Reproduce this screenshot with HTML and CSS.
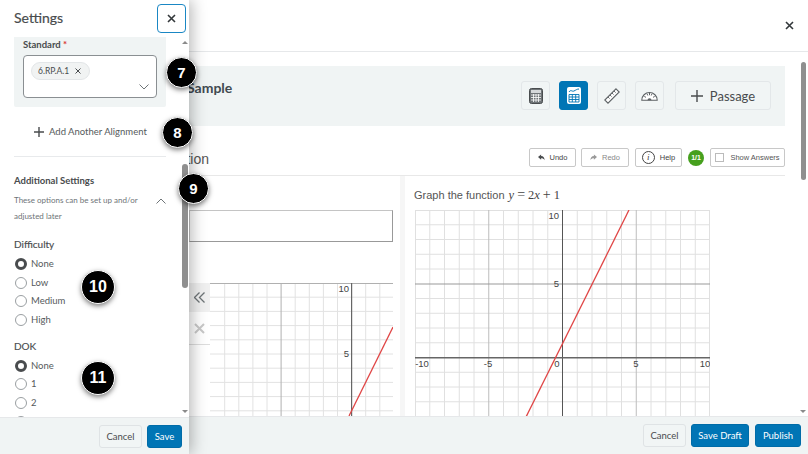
FILE: index.html
```html
<!DOCTYPE html>
<html lang="en">
<head>
  <meta charset="UTF-8">
  <title>Question Settings</title>
  <link rel="stylesheet" href="styles.css">
</head>
<body>
  <div class="page">
    <!-- Main dialog behind the settings panel -->
    <div class="main">
      <header class="main-head">
        <svg width="9" height="9" viewBox="0 0 9 9"><path d="M1 1l7 7M8 1L1 8" stroke="#33383b" stroke-width="1.6"/></svg>
      </header>

      <div class="content">
        <div class="banner">
          <h2 class="banner-title">Sample</h2>
          <div class="tools">
            <span class="tool">
              <svg width="14" height="16" viewBox="0 0 14 16"><rect x=".5" y=".5" width="13" height="15" rx="2" fill="#6f7477" stroke="#494c4e"/><rect x="2" y="2" width="10" height="3" fill="#d5d8da"/><path d="M2 7h10M2 9.5h10M2 12h10M4.5 6v8M7 6v8M9.5 6v8" stroke="#fff" stroke-width=".8"/></svg>
            </span>
            <span class="tool tool-on">
              <svg width="14" height="17" viewBox="0 0 14 17"><rect width="14" height="17" rx="2" fill="#fff"/><path d="M2 5c2-3 3 0 5-1s3-2 5-2" fill="none" stroke="#0075b5"/><path d="M2 7.500h10v7.500H2zM2 10h10M2 12.500h10M5.300 7.500V15M8.700 7.500V15" fill="none" stroke="#0075b5" stroke-width=".9"/></svg>
            </span>
            <span class="tool">
              <svg width="16" height="16" viewBox="0 0 16 16"><path d="M12 .8l3.200 3.200L4 15.200.8 12z" fill="#fff" stroke="#5c6164" stroke-width="1.100"/><path d="M10 3l1.600 1.600M8 5l1.600 1.600M6 7l1.600 1.600M4 9l1.600 1.600" stroke="#5c6164" stroke-width=".9"/></svg>
            </span>
            <span class="tool">
              <svg width="17" height="11" viewBox="0 0 17 11"><path d="M.8 10.200a7.700 7.700 0 0 1 15.400 0z" fill="#fff" stroke="#5c6164" stroke-width="1.100"/><path d="M3.300 6.500l1.700.8M6 3.800l.8 1.700M8.500 3v2.200M11 3.800l-.8 1.700M13.700 6.500l-1.700.8" stroke="#5c6164"/><path d="M6.500 10.200a2 2 0 0 1 4 0z" fill="#5c6164"/></svg>
            </span>
            <span class="tool tool-passage">
              <svg width="12" height="12" viewBox="0 0 12 12"><path d="M6 0v12M0 6h12" stroke="#494c4e" stroke-width="1.400"/></svg>
              Passage
            </span>
          </div>
        </div>

        <div class="question-head">
          <h3 class="question-title">Question</h3>
          <div class="question-actions">
            <span class="small-btn btn-undo">
              <svg width="7" height="7" viewBox="0 0 9 8"><path d="M4 0L0 3.500 4 7V5c2 0 3.500.5 4.500 2.500C8.500 4.500 7 2 4 2z" fill="#494c4e"/></svg>
              Undo
            </span>
            <span class="small-btn btn-redo">
              <svg width="7" height="7" viewBox="0 0 9 8"><path d="M5 0l4 3.500L5 7V5C3 5 1.500 5.500.5 7.500.5 4.500 2 2 5 2z" fill="#9a9a9a"/></svg>
              Redo
            </span>
            <span class="small-btn btn-help"><i class="help-icon">i</i>Help</span>
            <span class="score">1/1</span>
            <span class="small-btn btn-answers"><i class="check-box"></i>Show Answers</span>
          </div>
        </div>

        <div class="question-grid">
          <section class="part part-left">
            <div class="answer-box"></div>
            <div class="graph-wrap">
              <div class="graph-tools">
                <span class="graph-tool graph-tool-back">
                  <svg width="11" height="11" viewBox="0 0 11 11"><path d="M5.500.5l-5 5 5 5M10.500.5l-5 5 5 5" fill="none" stroke="#6e7477" stroke-width="1.300"/></svg>
                </span>
                <span class="graph-tool graph-tool-del">
                  <svg width="11" height="11" viewBox="0 0 11 11"><path d="M1 1l9 9M10 1l-9 9" stroke="#c8c8c8" stroke-width="2"/></svg>
                </span>
              </div>
              <svg class="graph" width="183" height="133" viewBox="0 0 183 133">
                <path d="M14.700 0v133M28.800 0v133M42.900 0v133M57 0v133M85.200 0v133M99.300 0v133M113.400 0v133M127.500 0v133M155.700 0v133M169.800 0v133" stroke="#e2e2e2" fill="none"/>
                <path d="M0 14.200h183M0 28.400h183M0 42.600h183M0 56.800h183M0 71h183M0 85.200h183M0 99.400h183M0 113.600h183M0 127.800h183" stroke="#e2e2e2" fill="none"/>
                <path d="M0 .5h183M71.100 0v133" stroke="#b0b0b0" fill="none"/>
                <path d="M141.600 0v133" stroke="#666" stroke-width="1.200" fill="none"/>
                <path d="M139 133L183 44" stroke="#e04545" stroke-width="1.300" fill="none"/>
                <text class="graph-num" x="139" y="9" text-anchor="end">10</text>
                <text class="graph-num" x="139" y="74" text-anchor="end">5</text>
              </svg>
            </div>
          </section>

          <section class="part part-right">
            <p class="prompt">Graph the function <span class="math"><i>y</i><span class="op">=</span>2<i>x</i><span class="op">+</span>1</span></p>
            <svg class="graph graph-main" width="295" height="207" viewBox="0 0 295 207">
              <path d="M.5 0v207M14.750 0v207M29.500 0v207M44.250 0v207M59 0v207M88.500 0v207M103.250 0v207M118 0v207M132.750 0v207M162.250 0v207M177 0v207M191.750 0v207M206.500 0v207M236 0v207M250.750 0v207M265.500 0v207M280.250 0v207M294.500 0v207" stroke="#e0e0e0" fill="none"/>
              <path d="M0 .5h295M0 14.750h295M0 29.500h295M0 44.250h295M0 59h295M0 88.500h295M0 103.250h295M0 118h295M0 132.750h295M0 162.250h295M0 177h295M0 191.750h295M0 206.500h295" stroke="#e0e0e0" fill="none"/>
              <path d="M73.750 0v207M221.250 0v207" stroke="#bdbdbd" fill="none"/>
              <path d="M0 74h295" stroke="#999" fill="none"/>
              <path d="M147.500 0v207" stroke="#555" fill="none"/>
              <path d="M0 147.700h295" stroke="#666" stroke-width="1.400" fill="none"/>
              <path d="M214 0L111 207" stroke="#e04545" stroke-width="1.300" fill="none"/>
              <text class="graph-num" x="144" y="9" text-anchor="end">10</text>
              <text class="graph-num" x="144" y="77" text-anchor="end">5</text>
              <text class="graph-num" x="7" y="157" text-anchor="middle">-10</text>
              <text class="graph-num" x="73" y="157" text-anchor="middle">-5</text>
              <text class="graph-num" x="142" y="157" text-anchor="middle">0</text>
              <text class="graph-num" x="221" y="157" text-anchor="middle">5</text>
              <text class="graph-num" x="290" y="157" text-anchor="middle">10</text>
            </svg>
          </section>
        </div>
      </div>

      <footer class="main-foot">
        <span class="btn btn-cancel">Cancel</span>
        <span class="btn btn-primary btn-draft">Save Draft</span>
        <span class="btn btn-primary btn-publish">Publish</span>
      </footer>
    </div>

    <!-- main scrollbar -->
    <div class="main-thumb"></div>
    <div class="arrow-down main-arrow"></div>

    <!-- Settings side panel -->
    <aside class="panel">
      <div class="panel-head">
        <h1 class="panel-title">Settings</h1>
        <span class="panel-close">
          <svg width="9" height="9" viewBox="0 0 9 9"><path d="M1 1l7 7M8 1L1 8" stroke="#33383b" stroke-width="1.6"/></svg>
        </span>
      </div>

      <div class="panel-body">
        <div class="standard-box">
          <label class="standard-label">Standard <b class="req">*</b></label>
          <div class="select-box">
            <span class="chip">6.RP.A.1
              <svg width="6" height="6" viewBox="0 0 6 6"><path d="M.5.5l5 5M5.500.5l-5 5" stroke="#494c4e"/></svg>
            </span>
            <svg class="select-caret" width="10" height="6" viewBox="0 0 10 6"><path d="M.5.5L5 5 9.500.5" fill="none" stroke="#6e7477"/></svg>
          </div>
        </div>

        <div class="add-row">
          <svg width="10" height="10" viewBox="0 0 10 10"><path d="M5 0v10M0 5h10" stroke="#494c4e" stroke-width="1.400"/></svg>
          Add Another Alignment
        </div>

        <h4 class="extra-title">Additional Settings</h4>
        <div class="extra-row">
          <p class="extra-text">These options can be set up and/or adjusted later</p>
          <svg width="10" height="6" viewBox="0 0 10 6"><path d="M.5 5.500L5 1l4.500 4.500" fill="none" stroke="#6e7477"/></svg>
        </div>

        <h4 class="group-title">Difficulty</h4>
        <ul class="radios">
          <li class="radio radio-on">None</li>
          <li class="radio">Low</li>
          <li class="radio">Medium</li>
          <li class="radio">High</li>
        </ul>

        <h4 class="group-title group-dok">DOK</h4>
        <ul class="radios">
          <li class="radio radio-on">None</li>
          <li class="radio">1</li>
          <li class="radio">2</li>
          <li class="radio"></li>
        </ul>
      </div>

      <div class="panel-foot">
        <span class="btn btn-cancel">Cancel</span>
        <span class="btn btn-primary btn-save">Save</span>
      </div>

      <div class="arrow-up panel-arrow-up"></div>
      <div class="panel-thumb"></div>
      <div class="arrow-down panel-arrow-down"></div>
    </aside>

    <!-- numbered callouts -->
    <span class="callout c7">7</span>
    <span class="callout c8">8</span>
    <span class="callout c9">9</span>
    <span class="callout big c10">10</span>
    <span class="callout big c11">11</span>
  </div>
</body>
</html>
```

FILE: styles.css
```css
* {
  box-sizing: border-box;
}
body {
  margin: 0;
  font-family: Lato, sans-serif;
  color: #494c4e;
  background: #fff;
}
h1, h2, h3, h4, p, ul {
  margin: 0;
  padding: 0;
}
.page {
  position: relative;
  width: 808px;
  height: 454px;
  overflow: hidden;
}
.main {
  display: flex;
  flex-direction: column;
  height: 454px;
}
.main-head {
  flex: 0 0 52px;
  display: flex;
  justify-content: flex-end;
  align-items: center;
  padding-right: 14px;
  border-bottom: 1px solid #e6e8ea;
}
.content {
  flex: 1;
  min-height: 0;
  overflow: hidden;
  padding: 14px 23px 0 0;
}
.banner {
  height: 60px;
  background: #f0f4f4;
  display: flex;
  justify-content: space-between;
  padding: 14px 14px 0 187px;
}
.banner-title {
  font-size: 14px;
  font-weight: 700;
  line-height: 16px;
  color: #414a50;
}
.tools {
  display: flex;
  gap: 9px;
  height: 29px;
  margin-top: 1px;
}
.tool {
  width: 29px;
  height: 29px;
  display: flex;
  align-items: center;
  justify-content: center;
  background: #f1f5f5;
  border: 1px solid #e3e7e9;
  border-radius: 3px;
}
.tool-on {
  background: #0075b5;
  border-color: #0075b5;
}
.tool-passage {
  width: 96px;
  margin-left: 2px;
  gap: 7px;
  font-size: 13px;
  color: #494c4e;
}
.question-head {
  display: flex;
  justify-content: space-between;
  align-items: flex-start;
  height: 50px;
  padding: 22px 0 0 153px;
  border-bottom: 1px solid #e8e8e8;
}
.question-title {
  margin-top: 2px;
  font: 400 14px/19px "Liberation Sans", sans-serif;
  color: #555;
}
.question-actions {
  display: flex;
  align-items: center;
  gap: 6px;
}
.small-btn {
  height: 19px;
  display: flex;
  align-items: center;
  justify-content: center;
  gap: 5px;
  background: #fff;
  border: 1px solid #c8c8c8;
  border-radius: 2px;
  font-family: "Liberation Sans", sans-serif;
  font-size: 7.5px;
  color: #444;
}
.btn-undo { width: 47px; margin-right: -1px; }
.btn-redo { width: 48px; color: #888; }
.btn-help { width: 47px; }
.btn-answers { width: 75px; gap: 6px; color: #555; }
.help-icon {
  width: 13px;
  height: 13px;
  border: 1px solid #444;
  border-radius: 50%;
  text-align: center;
  font: italic 9px/11px "Liberation Serif", serif;
}
.check-box {
  width: 9px;
  height: 9px;
  border: 1px solid #bbb;
}
.score {
  width: 16px;
  height: 16px;
  border-radius: 50%;
  background: #46a01e;
  color: #fff;
  font: 700 7px/16px "Liberation Sans", sans-serif;
  text-align: center;
}
.question-grid {
  display: grid;
  grid-template-columns: 1fr 380px;
  gap: 5px;
  height: 240px;
  background: #f6f6f6;
}
.part {
  background: #fff;
  overflow: hidden;
}
.part-left {
  padding: 34px 7px 0 189px;
}
.answer-box {
  height: 32px;
  border: 1px solid #c4c4c4;
  border-right-color: #999;
  border-bottom-color: #999;
}
.graph-wrap {
  display: flex;
  margin-top: 41px;
}
.graph-tools {
  flex: 0 0 21px;
  height: 62px;
  display: flex;
  flex-direction: column;
  border-bottom: 1px solid #ddd;
}
.graph-tool {
  height: 29px;
  display: flex;
  align-items: center;
  justify-content: center;
}
.graph-tool-back {
  background: #f0f0f0;
}
.graph-tool-del {
  height: 32px;
}
.graph {
  display: block;
  flex: none;
}
.graph-main {
  margin-left: 1px;
}
.graph-num {
  font: 9.5px "Liberation Sans", sans-serif;
  fill: #444;
}
.part-right {
  padding: 11px 0 0 9px;
}
.prompt {
  font: 11px/15px "Liberation Sans", sans-serif;
  color: #555;
  margin-bottom: 7px;
}
.math {
  margin-left: 1px;
  font: 12.5px "Liberation Serif", serif;
  color: #444;
}
.op {
  padding: 0 3px;
  font-size: 14px;
}
.main-foot {
  flex: 0 0 38px;
  display: flex;
  justify-content: flex-end;
  align-items: center;
  gap: 5px;
  padding-right: 7px;
  background: #f0f4f4;
  border-top: 1px solid #e6e8ea;
}
.btn {
  height: 23px;
  display: flex;
  align-items: center;
  justify-content: center;
  background: #f1f5f5;
  border: 1px solid #dfe3e5;
  border-radius: 3px;
  font-size: 9.5px;
  color: #494c4e;
}
.btn-cancel { width: 43px; }
.btn-draft { width: 58px; }
.btn-publish { width: 46px; margin-left: 1px; }
.btn-save { width: 35px; }
.btn-primary {
  background: #0075b5;
  border-color: #006ca8;
  color: #fff;
}
.main-thumb {
  position: absolute;
  left: 801px;
  top: 62px;
  width: 5px;
  height: 118px;
  background: #8f8f8f;
  border-radius: 3px;
}
.arrow-down,
.arrow-up {
  position: absolute;
  width: 0;
  height: 0;
  border-left: 3px solid transparent;
  border-right: 3px solid transparent;
}
.arrow-down {
  border-top: 3px solid #8a8a8a;
}
.arrow-up {
  border-bottom: 3px solid #8a8a8a;
}
.main-arrow {
  left: 800px;
  top: 410px;
}

/* settings panel */
.panel {
  position: absolute;
  left: 0;
  top: 0;
  width: 189px;
  height: 454px;
  display: flex;
  flex-direction: column;
  background: #fff;
  box-shadow: 3px 0 14px rgba(0, 0, 0, 0.28);
}
.panel-head {
  flex: 0 0 37px;
  display: flex;
  justify-content: space-between;
  align-items: flex-start;
  padding: 4px 3px 0 14px;
}
.panel-title {
  font-size: 14px;
  font-weight: 400;
  line-height: 28px;
  -webkit-text-stroke: 0.2px #494c4e;
}
.panel-close {
  width: 29px;
  height: 29px;
  display: flex;
  align-items: center;
  justify-content: center;
  border: 1px solid #1a87c4;
  border-radius: 4px;
}
.panel-body {
  flex: 1;
  min-height: 0;
  overflow: hidden;
  padding: 0 23px 0 14px;
}
.standard-box {
  height: 70px;
  padding: 1px 9px 0;
  background: #f0f4f4;
  border-radius: 0 0 2px 2px;
}
.standard-label {
  display: block;
  font-size: 9.5px;
  font-weight: 700;
  line-height: 14px;
}
.req {
  color: #d9383a;
}
.select-box {
  position: relative;
  height: 43px;
  margin-top: 3px;
  padding: 2px 7px;
  background: #fff;
  border: 1px solid #8a8f92;
  border-radius: 4px;
}
.chip {
  display: inline-flex;
  align-items: center;
  gap: 6px;
  height: 18px;
  width: 59px;
  padding-left: 6px;
  background: #f1f3f3;
  border: 1px solid #e3e6e8;
  border-radius: 9px;
  font-size: 8.5px;
}
.select-caret {
  position: absolute;
  right: 7px;
  top: 28px;
}
.add-row {
  height: 50px;
  display: flex;
  align-items: center;
  gap: 5px;
  padding-left: 20px;
  border-bottom: 1px solid #e8eaec;
  font-size: 9.5px;
  color: #565a5c;
}
.extra-title {
  margin-top: 17px;
  font-size: 9.5px;
  line-height: 14px;
}
.extra-row {
  display: flex;
  align-items: flex-start;
  justify-content: space-between;
  margin-top: 4px;
}
.extra-text {
  width: 132px;
  font-size: 8px;
  line-height: 16px;
  color: #6e7477;
}
.extra-row svg {
  margin-top: 6px;
}
.group-title {
  margin-top: 13px;
  font-size: 10px;
  font-weight: 400;
  line-height: 14px;
  -webkit-text-stroke: 0.15px #494c4e;
}
.group-dok {
  margin-top: 9px;
}
.radios {
  list-style: none;
  margin-top: 4px;
}
.radio {
  position: relative;
  height: 18.7px;
  padding-left: 17px;
  font-size: 9.5px;
  line-height: 18.7px;
  color: #565a5c;
}
.radio::before {
  content: "";
  box-sizing: border-box;
  position: absolute;
  left: 1px;
  top: 3px;
  width: 12px;
  height: 12px;
  background: #fff;
  border: 1px solid #9a9fa2;
  border-radius: 50%;
}
.radio-on::before {
  border: 3px solid #494c4e;
}
.panel-foot {
  flex: 0 0 37px;
  display: flex;
  justify-content: flex-end;
  align-items: center;
  gap: 5px;
  padding-right: 7px;
  background: #f0f4f4;
  border-top: 1px solid #e6e8ea;
}
.panel-arrow-up {
  left: 182px;
  top: 41px;
}
.panel-arrow-down {
  left: 182px;
  top: 410px;
}
.panel-thumb {
  position: absolute;
  left: 182px;
  top: 164px;
  width: 6px;
  height: 124px;
  background: #8f8f8f;
  border-radius: 3px;
}

/* numbered callouts over the page */
.callout {
  position: absolute;
  width: 31px;
  height: 31px;
  border: 1px solid #fff;
  border-radius: 50%;
  background: #000;
  color: #fff;
  font: 700 15px/29px "Liberation Sans", sans-serif;
  text-align: center;
  box-shadow: 0 2px 5px rgba(0, 0, 0, 0.5);
}
.big {
  width: 34px;
  height: 34px;
  font-size: 16px;
  line-height: 32px;
}
.c7 { left: 166px; top: 57px; }
.c8 { left: 162px; top: 117px; }
.c9 { left: 178px; top: 173px; }
.c10 { left: 81px; top: 270px; }
.c11 { left: 81px; top: 361px; }
```
